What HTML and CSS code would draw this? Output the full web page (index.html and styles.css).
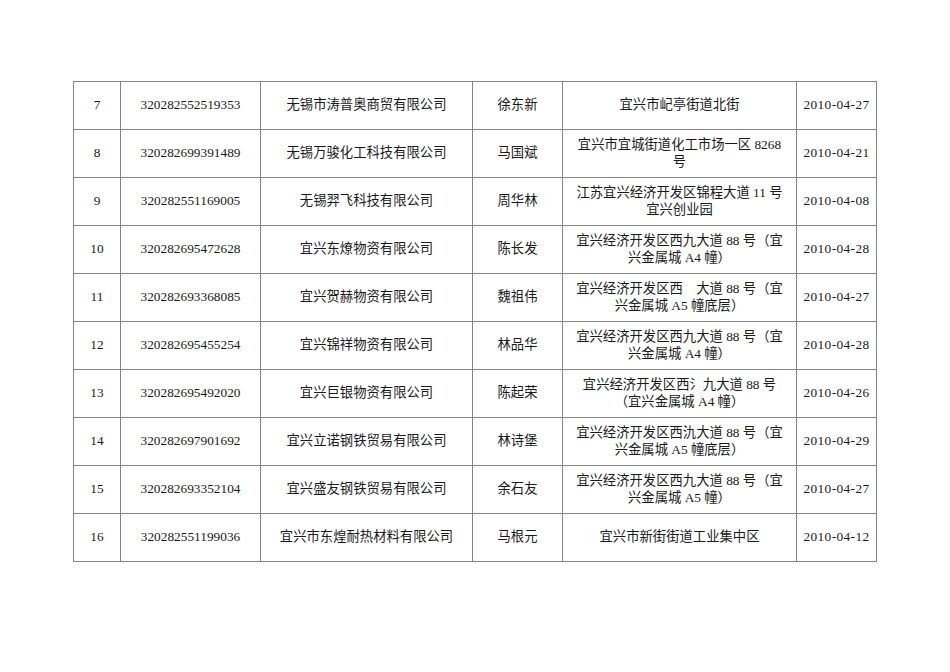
FILE: index.html
```html
<!DOCTYPE html>
<html lang="zh-CN">
<head>
<meta charset="utf-8">
<title>企业名单</title>
<link rel="stylesheet" href="styles.css">
</head>
<body>
<div class="page">
  <table class="list">
    <colgroup>
      <col class="c-no">
      <col class="c-id">
      <col class="c-name">
      <col class="c-person">
      <col class="c-addr">
      <col class="c-date">
    </colgroup>
    <tbody>
      <tr><td>7</td><td>320282552519353</td><td>无锡市涛普奥商贸有限公司</td><td>徐东新</td><td>宜兴市屺亭街道北街</td><td class="date">2010-04-27</td></tr>
      <tr><td>8</td><td>320282699391489</td><td>无锡万骏化工科技有限公司</td><td>马国斌</td><td>宜兴市宜城街道化工市场一区 8268<br>号</td><td class="date">2010-04-21</td></tr>
      <tr><td>9</td><td>320282551169005</td><td>无锡羿飞科技有限公司</td><td>周华林</td><td>江苏宜兴经济开发区锦程大道 11 号<br>宜兴创业园</td><td class="date">2010-04-08</td></tr>
      <tr><td>10</td><td>320282695472628</td><td>宜兴东燎物资有限公司</td><td>陈长发</td><td>宜兴经济开发区西九大道 88 号（宜<br>兴金属城 A4 幢）</td><td class="date">2010-04-28</td></tr>
      <tr><td>11</td><td>320282693368085</td><td>宜兴贺赫物资有限公司</td><td>魏祖伟</td><td>宜兴经济开发区西　大道 88 号（宜<br>兴金属城 A5 幢底层）</td><td class="date">2010-04-27</td></tr>
      <tr><td>12</td><td>320282695455254</td><td>宜兴锦祥物资有限公司</td><td>林品华</td><td>宜兴经济开发区西九大道 88 号（宜<br>兴金属城 A4 幢）</td><td class="date">2010-04-28</td></tr>
      <tr><td>13</td><td>320282695492020</td><td>宜兴巨银物资有限公司</td><td>陈起荣</td><td>宜兴经济开发区西氵九大道 88 号<br>（宜兴金属城 A4 幢）</td><td class="date">2010-04-26</td></tr>
      <tr><td>14</td><td>320282697901692</td><td>宜兴立诺钢铁贸易有限公司</td><td>林诗堡</td><td>宜兴经济开发区西氿大道 88 号（宜<br>兴金属城 A5 幢底层）</td><td class="date">2010-04-29</td></tr>
      <tr><td>15</td><td>320282693352104</td><td>宜兴盛友钢铁贸易有限公司</td><td>余石友</td><td>宜兴经济开发区西九大道 88 号（宜<br>兴金属城 A5 幢）</td><td class="date">2010-04-27</td></tr>
      <tr><td>16</td><td>320282551199036</td><td>宜兴市东煌耐热材料有限公司</td><td>马根元</td><td>宜兴市新街街道工业集中区</td><td class="date">2010-04-12</td></tr>
    </tbody>
  </table>
</div>
</body>
</html>
```
FILE: styles.css
```css
html, body {
  margin: 0;
  padding: 0;
  background: #ffffff;
}

.page {
  padding: 81px 0 0 73px;
}

.list {
  border-collapse: collapse;
  table-layout: fixed;
  width: 803px;
  font-family: "Liberation Serif", "Noto Sans CJK SC", serif;
  font-size: 13.33px;
  line-height: 16.7px;
  color: #1a1a1a;
}

.c-no { width: 47px; }
.c-id { width: 140px; }
.c-name { width: 212px; }
.c-person { width: 90px; }
.c-addr { width: 234px; }
.c-date { width: 80px; }

.list tr {
  height: 48px;
}

.list td {
  border: 1px solid #858585;
  padding: 0 4px;
  text-align: center;
  vertical-align: middle;
  white-space: nowrap;
}

.list td.date {
  letter-spacing: 0.4px;
}
```
